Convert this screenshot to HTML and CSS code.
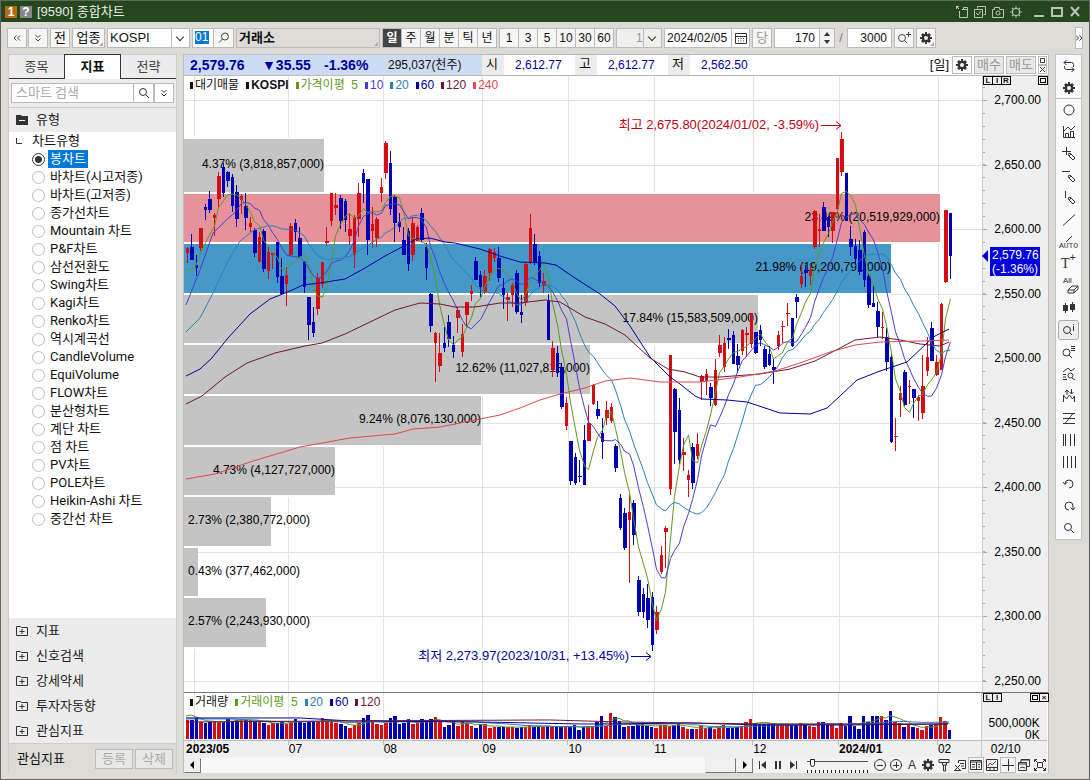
FILE: index.html
```html
<!DOCTYPE html>
<html lang="ko">
<head>
<meta charset="utf-8">
<title>[9590] 종합차트</title>
<link rel="stylesheet" href="styles.css">
</head>
<body>
<svg class="defs" aria-hidden="true">
  <symbol id="gear" viewBox="0 0 12 12"><path d="M5 0h2v2h1l1-1 2 2-1 1v1h2v2h-2v1l1 1-2 2-1-1h-1v2H5v-2H4l-1 1-2-2 1-1V7H0V5h2V4L1 3l2-2 1 1h1zM6 4a2 2 0 1 0 0 4 2 2 0 0 0 0-4z" fill="currentColor" fill-rule="evenodd"/></symbol>
  <symbol id="sun" viewBox="0 0 12 12"><circle cx="6" cy="6" r="3" /><path d="M6 1v2M6 9v2M1 6h2M9 6h2M2.500 2.500l1 1M8.500 8.500l1 1M2.500 9.500l1-1M8.500 3.500l1-1"/></symbol>
  <symbol id="search" viewBox="0 0 12 12"><circle cx="5" cy="5" r="3.5"/><path d="M7.5 7.5L11 11"/></symbol>
  <symbol id="searchl" viewBox="0 0 12 12"><circle cx="7" cy="4.500" r="3.500"/><path d="M4.500 7L1 10.500"/></symbol>
  <symbol id="dblleft" viewBox="0 0 12 12"><path d="M5.500 3.500L3 6l2.500 2.500M9 3.500L6.500 6 9 8.500"/></symbol>
  <symbol id="dblright" viewBox="0 0 12 12"><path d="M3 3.500L5.500 6 3 8.500M6.500 3.500L9 6 6.500 8.500"/></symbol>
  <symbol id="dbldown" viewBox="0 0 12 12"><path d="M3.500 3L6 5.500 8.500 3M3.500 6.500L6 9l2.500-2.500"/></symbol>
  <symbol id="folder" viewBox="0 0 12 12"><path d="M.5 1.500h4l1 1h6v8H.5zM6 4v5M3.500 6.500h5"/></symbol>
  <symbol id="folderopen" viewBox="0 0 12 12"><path d="M0 1h5l1 1h6v9H0z" fill="#333" stroke="none"/><path d="M3 6.500h6" stroke="#fff"/></symbol>
  <symbol id="pencil" viewBox="0 0 14 14"><path d="M6 7l2-1 5 5-2 2-4-4zM7 9l2-2"/></symbol>
</svg>

<header class="titlebar">
  <span class="badge badge-no">1</span><span class="badge badge-help">?</span>
  <h1>[9590] 종합차트</h1>
  <div class="winbtns">
    <button aria-label="이동"><svg class="i14" viewBox="0 0 14 14"><path d="M1 1l3 3M1.500 4V1.500H4M4.500 6v6.500h8v-8H7M8.500 4.500v-2h4v2"/></svg></button>
    <button aria-label="선택"><svg class="i14" viewBox="0 0 14 14"><path d="M4.500 3.500v-2h8v8h-2M1.500 4.500h8v8h-8zM3 8l2 2 3-4"/></svg></button>
    <button aria-label="캡처"><svg class="i14" viewBox="0 0 14 14"><path d="M1.500 4.500h2v-2h5v2h4v8h-11z"/><circle cx="7" cy="8" r="2"/></svg></button>
    <button aria-label="설정"><svg class="i14"><use href="#sun"/></svg></button>
    <button aria-label="최소화" class="big"><svg class="i14" viewBox="0 0 14 14"><path d="M2 11h10" stroke-width="2"/></svg></button>
    <button aria-label="최대화"><svg class="i14" viewBox="0 0 14 14"><path d="M2 3h10v8H2z" stroke-width="2"/></svg></button>
    <button aria-label="닫기"><svg class="i14" viewBox="0 0 14 14"><path d="M3 2l8 9M11 2l-8 9" stroke-width="2"/></svg></button>
  </div>
</header>

<div class="toolbar">
  <div class="pair"><button class="btn" aria-label="접기"><svg class="i12"><use href="#dblleft"/></svg></button><button class="btn" aria-label="펼치기"><svg class="i12"><use href="#dbldown"/></svg></button></div>
  <button class="btn">전</button>
  <button class="btn wide corner">업종</button>
  <div class="combo symbol"><select aria-label="지수"><option>KOSPI</option></select></div>
  <div class="code"><input aria-label="코드" value="01"><button class="btn" aria-label="찾기"><svg class="i12"><use href="#searchl"/></svg></button></div>
  <div class="name corner">거래소</div>
  <div class="seg"><button class="on">일</button><button>주</button><button>월</button><button>분</button><button>틱</button><button>년</button></div>
  <div class="seg"><button>1</button><button>3</button><button>5</button><button>10</button><button>30</button><button>60</button></div>
  <div class="combo unit"><select aria-label="단위"><option>1</option></select></div>
  <div class="date"><input aria-label="날짜" value="2024/02/05"><button aria-label="달력"><svg class="i12" viewBox="0 0 12 12"><path d="M.5 1.500h11v10H.5zM.5 4.500h11M3 6.500h1M5.500 6.500h1M8 6.500h1M3 9h1M5.500 9h1M8 9h1"/></svg></button></div>
  <button class="btn dim">당</button>
  <div class="spin"><input aria-label="봉 개수" value="170"><button aria-label="증감"><svg viewBox="0 0 8 14"><path d="M1 5l3-4 3 4zM1 9l3 4 3-4z"/></svg></button></div>
  <span class="slash">/</span>
  <input class="total" aria-label="전체 개수" value="3000">
  <button class="btn" aria-label="확대"><svg class="i14" viewBox="0 0 14 14"><circle cx="5" cy="7" r="3.500"/><path d="M7.500 9.500L10 12M11.500 1v5M9 3.500h5"/></svg></button>
  <button class="btn corner" aria-label="환경설정"><svg class="i12"><use href="#gear"/></svg></button>
  <button class="more" aria-label="더보기"><svg class="i12"><use href="#dblright"/></svg></button>
</div>

<div class="body">
  <aside class="side">
    <nav class="tabs"><button>종목</button><button class="on">지표</button><button>전략</button></nav>
    <div class="find"><input aria-label="스마트 검색" placeholder="스마트 검색"><button aria-label="검색"><svg class="i12"><use href="#search"/></svg></button><button class="sep" aria-label="옵션"><svg class="i12"><use href="#dbldown"/></svg></button></div>
    <button class="group first"><svg class="i12"><use href="#folderopen"/></svg>유형</button>
    <div class="tree">
      <div class="root"><svg viewBox="0 0 6 6"><path d="M.5 0v5.500H6"/></svg>차트유형</div>
      <label><input type="radio" name="t" checked><span>봉차트</span></label>
      <label><input type="radio" name="t"><span>바차트(시고저종)</span></label>
      <label><input type="radio" name="t"><span>바차트(고저종)</span></label>
      <label><input type="radio" name="t"><span>종가선차트</span></label>
      <label><input type="radio" name="t"><span>Mountain 차트</span></label>
      <label><input type="radio" name="t"><span>P&amp;F차트</span></label>
      <label><input type="radio" name="t"><span>삼선전환도</span></label>
      <label><input type="radio" name="t"><span>Swing차트</span></label>
      <label><input type="radio" name="t"><span>Kagi차트</span></label>
      <label><input type="radio" name="t"><span>Renko차트</span></label>
      <label><input type="radio" name="t"><span>역시계곡선</span></label>
      <label><input type="radio" name="t"><span>CandleVolume</span></label>
      <label><input type="radio" name="t"><span>EquiVolume</span></label>
      <label><input type="radio" name="t"><span>FLOW차트</span></label>
      <label><input type="radio" name="t"><span>분산형차트</span></label>
      <label><input type="radio" name="t"><span>계단 차트</span></label>
      <label><input type="radio" name="t"><span>점 차트</span></label>
      <label><input type="radio" name="t"><span>PV차트</span></label>
      <label><input type="radio" name="t"><span>POLE차트</span></label>
      <label><input type="radio" name="t"><span>Heikin-Ashi 차트</span></label>
      <label><input type="radio" name="t"><span>중간선 차트</span></label>
    </div>
    <button class="group"><svg class="i12"><use href="#folder"/></svg>지표</button>
    <button class="group"><svg class="i12"><use href="#folder"/></svg>신호검색</button>
    <button class="group"><svg class="i12"><use href="#folder"/></svg>강세약세</button>
    <button class="group"><svg class="i12"><use href="#folder"/></svg>투자자동향</button>
    <button class="group"><svg class="i12"><use href="#folder"/></svg>관심지표</button>
    <div class="sidefoot"><span>관심지표</span><button disabled>등록</button><button disabled>삭제</button></div>
  </aside>

  <main class="panel">
    <div class="quote">
      <div class="now"><b>2,579.76</b><b class="diff">▼35.55</b><b class="pct">-1.36%</b><span>295,037(천주)</span></div>
      <span class="k">시</span><span class="v">2,612.77</span>
      <span class="k">고</span><span class="v">2,612.77</span>
      <span class="k">저</span><span class="v">2,562.50</span>
      <span class="day">[일]</span>
      <button class="qb sq" aria-label="설정"><svg class="i12"><use href="#gear"/></svg></button>
      <button class="qb">매수</button><button class="qb">매도</button>
      <div class="mini"><button aria-label="최대화"><svg viewBox="0 0 7 7"><path d="M1.500 1.500h4v4h-4z"/></svg></button><button aria-label="닫기"><svg viewBox="0 0 7 7"><path d="M1 1l5 5M6 1L1 6"/></svg></button></div>
    </div>
    <section class="plot">
      <svg id="price" viewBox="184 76 864 616" preserveAspectRatio="xMinYMin meet" role="img" aria-label="KOSPI 일봉 차트"></svg>
      <div class="legend"><span>대기매물</span><span><b>KOSPI</b></span><span class="c5">가격이평&nbsp; 5</span><span class="c10">10</span><span class="c20">20</span><span class="c60">60</span><span class="c120">120</span><span class="c240">240</span></div>
      <div class="scale"><button>L</button><button>I</button><button>R</button><button class="end" aria-label="최대화"><i></i></button></div>
    </section>
    <section class="plot vol">
      <svg id="volume" viewBox="184 693 864 64" preserveAspectRatio="xMinYMin meet" role="img" aria-label="거래량"></svg>
      <div class="legend"><span>거래량</span><span class="c5">거래이평&nbsp; 5</span><span class="c20">20</span><span class="c60">60</span><span class="c120">120</span></div>
      <div class="scale"><button>L</button><button>I</button><button class="end" aria-label="최대화"><i></i></button><button aria-label="닫기">×</button></div>
    </section>
    <footer class="foot">
      <button class="arrow" aria-label="왼쪽"><svg viewBox="0 0 5 8"><path d="M4 0v8L0 4z"/></svg></button>
      <div class="track"><div class="thumb"></div></div>
      <button class="arrow" aria-label="오른쪽"><svg viewBox="0 0 5 8"><path d="M1 0v8l4-4z"/></svg></button>
      <div class="play">
        <button aria-label="처음"><svg class="i12" viewBox="0 0 12 12"><path d="M2.500 2v8"/><path class="f" d="M9 2v8L4 6z"/></svg></button>
        <button aria-label="일시정지"><svg class="i12" viewBox="0 0 12 12"><path d="M4 2v8M8 2v8" stroke-width="2"/></svg></button>
        <button aria-label="끝"><svg class="i12" viewBox="0 0 12 12"><path d="M9.500 2v8"/><path class="f" d="M3 2v8l5-4z"/></svg></button>
      </div>
      <input class="speed" type="range" min="0" max="100" value="5" aria-label="속도">
      <div class="tools">
        <button aria-label="축소"><svg class="i14" viewBox="0 0 14 14"><circle cx="7" cy="7" r="5.500"/><path d="M4 7.500h6"/></svg></button>
        <button aria-label="확대"><svg class="i14" viewBox="0 0 14 14"><circle cx="7" cy="7" r="5.500"/><path d="M4 7.500h6M7.500 4v6"/></svg></button>
        <button>A</button>
        <button aria-label="설정"><svg class="i12"><use href="#gear"/></svg></button>
        <button aria-label="도구"><svg class="i14" viewBox="0 0 14 14"><path d="M2 1.500h10v3H2zM5.500 5v2h4V5M6.500 7v6h2V7"/></svg></button>
        <button aria-label="엑셀"><svg class="i14" viewBox="0 0 14 14"><path d="M5.500 5V2.500h7v8H9M7 5.500h4M8 8h3M2 7l5 5M7 7l-5 5M1 12.500h7"/></svg></button>
        <button class="box" aria-label="표"><svg class="i14" viewBox="0 0 14 14"><path d="M1.500 2.500h11v9h-11zM1 4h12M7.500 4v8M3 6.500h3M3 9h3M9 6.500h2M9 9h2"/></svg></button>
        <button aria-label="차트"><svg class="i14" viewBox="0 0 14 14"><path d="M1.500 1.500h11v11h-11zM2 9.500h10M5 10v2M9 10v2"/><path d="M3 8l2-3 2 2 4-4" stroke="#b03050"/></svg></button>
        <button class="box" aria-label="십자선"><svg class="i14" viewBox="0 0 14 14"><path d="M7.500 1v12M1 7.500h12"/></svg></button>
        <button aria-label="창"><svg class="i14" viewBox="0 0 14 14"><path d="M4 4V1.500h8.500v7H10M1.500 4.500h8v8h-8zM1 6h9M4 2h9M3 10l2-1 3 1"/></svg></button>
        <button aria-label="전체"><svg class="i14" viewBox="0 0 14 14"><path d="M4.500 4.500h5v5h-5zM1.500 4V1.500H4M10 1.500h2.500V4M12.500 10v2.500H10M4 12.500H1.500V10M2 2l2 2M12 2l-2 2M2 12l2-2M12 12l-2-2"/></svg></button>
      </div>
    </footer>
  </main>

  <nav class="rail">
    <button aria-label="순환"><svg class="i14" viewBox="0 0 14 14"><path d="M4.500 1L2 3.500 4.500 6M2 3.500h7.500a2 2 0 0 1 2 2V8M9.500 8l2.500 2.500L9.500 13M12 10.500H4.500a2 2 0 0 1-2-2V7"/></svg></button>
    <button class="line" aria-label="설정"><svg class="i12"><use href="#gear"/></svg></button>
    <button aria-label="원"><svg class="i14" viewBox="0 0 14 14"><circle cx="7" cy="7" r="5"/></svg></button>
    <button aria-label="지표"><svg class="i14" viewBox="0 0 14 14"><path d="M1.500 1v11.500H13M2 6l4-4 3 3 4-4M3.500 12V8.500h3V12M8.500 12V6.500h3V12"/></svg></button>
    <button aria-label="십자선 그리기"><svg class="i14" viewBox="0 0 14 14"><path d="M4.500 0v8M0 4.500h9"/><use href="#pencil"/></svg></button>
    <button aria-label="수평선 그리기"><svg class="i14" viewBox="0 0 14 14"><path d="M0 2.500h8"/><use href="#pencil"/></svg></button>
    <button aria-label="수직선 그리기"><svg class="i14" viewBox="0 0 14 14"><path d="M3.500 0v7"/><use href="#pencil"/></svg></button>
    <button aria-label="추세선"><svg class="i14" viewBox="0 0 14 14"><path d="M1 12.500L13 1.500"/></svg></button>
    <button class="auto" aria-label="자동 추세선"><svg viewBox="0 0 16 7"><path d="M5 7l6-6"/></svg>AUTO</button>
    <button class="txt" aria-label="문자">T<sup>+</sup></button>
    <button class="all" aria-label="전체 삭제">All<svg class="i12" viewBox="0 0 12 12"><path d="M1 6l4-4h6L7 6zM1 6v3h6V6M7 9l4-4V2"/></svg></button>
    <button aria-label="봉"><svg class="i14" viewBox="0 0 14 14"><path d="M3.500 2v10M10.500 1v10"/><path class="f" d="M1 4h5v6H1zM8 3h5v6H8z"/></svg></button>
    <button class="sel" aria-label="정보 보기"><svg class="i14" viewBox="0 0 14 14"><circle cx="5" cy="7" r="3.500"/><path d="M7.500 9.500L10 12M11.500 1v1M11.500 3v5"/></svg></button>
    <button aria-label="목록 보기"><svg class="i14" viewBox="0 0 14 14"><circle cx="4.500" cy="7.500" r="3.500"/><path d="M7 10l3 3M9 1.500h4M9 3.500h4M9 5.500h4"/></svg></button>
    <button aria-label="패턴 찾기"><svg class="i14" viewBox="0 0 14 14"><path d="M1 5l5-4 3 3 4-3M1 7.500h3M1 10h3M1 12.500h4M10 11l3 2"/><circle cx="8.500" cy="8.500" r="2.500"/></svg></button>
    <button aria-label="신호"><svg class="i14" viewBox="0 0 14 14"><path d="M1.500 13V6l3 4 3-4 3 4 2-3v6M5 6V1M3 3l2-2 2 2M9.500 0v5M7.500 3l2 2 2-2"/></svg></button>
    <button aria-label="피보나치"><svg class="i14" viewBox="0 0 14 14"><path d="M1 2.500h12M1 7.500h12M1 12.500h12M11 2.500L3 12.500"/></svg></button>
    <button aria-label="시간대"><svg class="i14" viewBox="0 0 14 14"><path d="M1.500 1v12M3.500 1v12M8.500 1v12M12.500 1v12"/></svg></button>
    <button aria-label="등간격"><svg class="i14" viewBox="0 0 14 14"><path d="M1.500 1v12M5.500 1v12M9.500 1v12M13.500 1v12"/></svg></button>
    <button aria-label="되돌리기"><svg class="i14" viewBox="0 0 14 14"><path d="M3 7a4 4 0 1 1 4 4M1 5l2 2.500L5.500 5"/></svg></button>
    <button aria-label="다시하기"><svg class="i14" viewBox="0 0 14 14"><path d="M7 11a4 4 0 1 1 4-4v3M8.500 8.500L11 11l2-2.500"/></svg></button>
    <button aria-label="돋보기"><svg class="i12"><use href="#search"/></svg></button>
  </nav>
</div>
<script src="chart.js"></script>
</body>
</html>
```
FILE: styles.css
```css
* { box-sizing: border-box; }
body {
  margin: 0;
  min-height: 100vh;
  display: flex;
  flex-direction: column;
  background: #dcdbd6;
  border: 1px solid #666;
  border-top-color: #5c7058;
  color: #111;
  font: 12px/16px "Liberation Sans", "Noto Sans CJK KR", sans-serif;
}
button, input, select { font: inherit; color: inherit; margin: 0; padding: 0; border-radius: 0; }
button { display: flex; align-items: center; justify-content: center; background: none; border: 0; flex: none; white-space: nowrap; }
input { min-width: 0; border: 0; background: none; outline: 0; }
svg { fill: none; stroke: #333; flex: none; }
.defs { position: absolute; width: 0; height: 0; }
.i12 { width: 12px; height: 12px; }
.i14 { width: 14px; height: 14px; }
.f { fill: #333; stroke: none; }
use[href="#gear"] { stroke: none; color: #333; }

.titlebar { height: 21px; flex: none; display: flex; align-items: center; gap: 3px; padding: 0 7px 0 4px; background: #25461e; color: #e8ece6; }
.badge { width: 12px; height: 12px; background: #b86a10; color: #fff; font-weight: bold; line-height: 12px; text-align: center; }
.badge-help { background: #85888a; }
.titlebar h1 { flex: 1; margin: 0 0 0 2px; font-size: 13px; font-weight: normal; line-height: 16px; }
.winbtns { display: flex; gap: 4px; }
.winbtns svg { stroke: #b9c4b5; }
.winbtns .big { margin-left: 5px; }

.toolbar { display: flex; align-items: center; gap: 2px; height: 32px; flex: none; padding-left: 6px; }
.pair { display: flex; gap: 1px; }
.btn { width: 20px; height: 20px; background: #f6f6f5; border: 1px solid #bbb; font-size: 13px; }
.btn svg { stroke: #444; }
.wide { width: 33px; }
.dim { color: #999; }
.corner { position: relative; }
.corner::after { content: ""; position: absolute; right: 1px; bottom: 1px; border: 2px solid; border-color: transparent #aaa #aaa transparent; }
.combo { position: relative; height: 20px; border: 1px solid #bbb; background: #fff; }
.combo select { width: 100%; height: 18px; border: 0; appearance: none; background: none; padding-left: 2px; font-size: 13px; line-height: 16px; }
.combo::after { content: ""; position: absolute; right: 6px; top: 5px; width: 5px; height: 5px; border: solid #333; border-width: 0 1px 1px 0; transform: rotate(45deg); }
.combo::before { content: ""; position: absolute; right: 17px; top: 0; width: 1px; height: 18px; background: #bbb; }
.symbol { width: 83px; }
.unit { width: 46px; background: #efefee; color: #999; }
.unit select { padding-left: 19px; font-size: 12px; }
.code { display: flex; width: 42px; height: 20px; border: 1px solid #bbb; background: #fff; }
.code input { width: 14px; height: 13px; margin: 2px 4px 0 2px; background: #0078d7; color: #fff; font-size: 12px; line-height: 13px; }
.code .btn { height: 18px; border-width: 0 0 0 1px; }
.name { width: 144px; height: 20px; border: 1px solid #bbb; padding-left: 2px; font-size: 13px; font-weight: bold; line-height: 17px; }
.seg { display: flex; height: 20px; border: 1px solid #bbb; background: #f6f6f5; }
.seg button { width: 19px; border-right: 1px solid #bbb; font-size: 12px; }
.seg button:last-child { border: 0; width: 18px; }
.seg .on { background: #444; color: #fff; font-weight: bold; }
.date { display: flex; width: 86px; height: 20px; border: 1px solid #bbb; background: #fff; }
.date input { flex: 1; padding-left: 2px; }
.date button { width: 18px; border-left: 1px solid #bbb; }
.spin { display: flex; width: 61px; height: 20px; border: 1px solid #bbb; background: #fff; }
.spin input { flex: 1; text-align: right; padding-right: 4px; }
.spin button { width: 15px; border-left: 1px solid #bbb; background: #f3f3f3; }
.spin svg { width: 8px; height: 14px; fill: #333; stroke: none; }
.slash { width: 8px; text-align: center; color: #777; }
.total { width: 45px; height: 20px; border: 1px solid #bbb; background: #fff; text-align: right; padding-right: 4px; }
.more { width: 8px; height: 22px; margin: 0 6px 0 auto; background: #fafafa; border: 1px solid #bbb; overflow: hidden; }

.body { flex: 1; display: flex; align-items: stretch; gap: 6px; padding: 0 7px 6px 7px; min-height: 0; }

.side { width: 169px; flex: none; display: flex; flex-direction: column; background: #ececec; border: solid #ccc; border-width: 0 1px; font: 13px/18px Roboto, "Noto Sans CJK KR", sans-serif; }
.tabs { display: flex; height: 25px; }
.tabs button { flex: 1; border-top: 1px solid #ccc; border-bottom: 1px solid #333; color: #444; }
.tabs .on { background: #fff; border: 1px solid #333; border-bottom: 0; color: #111; font-weight: bold; }
.find { display: flex; height: 20px; margin: 4px 2px; border: 1px solid #bbb; background: #fff; }
.find input { flex: 1; padding-left: 4px; }
.find input::placeholder { color: #aaa; }
.find button { width: 20px; border-left: 1px solid #bbb; }
.find .sep { border-left: 2px solid #bbb; }
.group { height: 25px; justify-content: flex-start; gap: 8px; padding-left: 7px; color: #222; }
.first { border-top: 1px solid #ccc; }
.tree { flex: 1; background: #fff; overflow: hidden; }
.root, .tree label { display: flex; align-items: center; height: 18px; }
.root { gap: 10px; padding-left: 7px; }
.root svg { width: 6px; height: 6px; }
.tree label { padding-left: 23px; gap: 3px; }
.tree input { appearance: none; width: 13px; height: 13px; border: 1px solid #bbb; border-radius: 50%; background: #fff; }
.tree input:checked { border-color: #333; background: radial-gradient(circle, #333 3px, #fff 4px); }
.tree span { padding: 0 2px; }
.tree input:checked + span { background: #0078d7; color: #fff; }
.sidefoot { display: flex; align-items: center; gap: 2px; height: 30px; padding: 0 3px 0 8px; background: #dcdbd6; border-top: 1px solid #ccc; }
.sidefoot span { flex: 1; }
.sidefoot button { width: 38px; height: 20px; border: 1px solid #bbb; background: #e8e8e6; color: #aaa; }

.panel { flex: 1; min-width: 0; display: flex; flex-direction: column; background: #fff; border: 1px solid #bbb; border-bottom: 0; }
.quote { display: flex; align-items: center; height: 21px; flex: none; border-bottom: 1px solid #bbb; color: #0000a0; }
.now { display: flex; align-items: center; width: 298px; height: 20px; padding-left: 6px; background: #cddcf2; }
.now b { font-size: 14px; width: 72px; }
.now .diff { width: 62px; }
.now .pct { width: 64px; }
.now span, .k, .day { color: #111; }
.k { width: 22px; height: 20px; line-height: 18px; background: #ececec; padding-left: 4px; font-size: 13px; }
.v { width: 71px; padding-left: 11px; }
.day { margin-left: auto; margin-right: 3px; font-size: 13px; }
.qb { width: 30px; height: 18px; margin-right: 2px; border: 1px solid #bbb; background: #e8e8e8; color: #999; font-size: 13px; }
.sq { width: 20px; background: #fafafa; }
.mini { display: flex; flex-direction: column; width: 9px; margin-right: 1px; }
.mini button { height: 9px; border: 1px solid #bbb; }
.mini svg { width: 7px; height: 7px; }
.plot { position: relative; display: flex; flex: 617 0 0; min-height: 0; border-bottom: 1px solid #777; }
.vol { flex-grow: 64; border-bottom: 0; }
.plot > svg { flex: 1; min-width: 0; width: 100%; stroke: none; }
.plot text { font-size: 12px; fill: #000; stroke: none; }
.plot text.note { font-size: 13px; }
.legend { position: absolute; left: 6px; top: 1px; display: flex; gap: 7px; }
.legend span { display: flex; align-items: center; gap: 2px; }
.legend span::before { content: ""; width: 3px; height: 7px; background: currentColor; }
.c5 { color: #5f9a1c; }
.c10 { color: #4a3fd0; }
.c20 { color: #2a80b8; }
.c60 { color: #0000a0; }
.c120 { color: #6a1838; }
.c240 { color: #e04850; }
.scale { position: absolute; right: 0; top: 0; width: 65px; display: flex; }
.scale button { width: 10px; height: 9px; border: 1px solid #000; margin-right: -1px; font: bold 8px/8px "Liberation Sans", sans-serif; }
.scale .end { margin-left: auto; }
.scale .end:last-child { margin-right: 0; }
.scale i { width: 6px; height: 5px; border: 1px solid #000; }

.foot { display: flex; align-items: center; height: 16px; flex: none; background: #f3f3f3; }
.arrow { width: 17px; height: 15px; border: 1px solid; border-color: #eee #777 #777 #eee; background: #f0f0f0; }
.arrow svg { width: 5px; height: 8px; fill: #000; stroke: none; }
.track { flex: 1; display: flex; justify-content: flex-end; height: 15px; background: #f8f8f8; }
.thumb { width: 31px; background: #f0f0f0; border: 1px solid; border-color: #eee #777 #777 #eee; }
.play { display: flex; gap: 3px; margin: 0 8px 0 4px; }
.speed { appearance: none; width: 61px; height: 15px; background: linear-gradient(#555, #555) 0 3px / 100% 1px no-repeat, repeating-linear-gradient(90deg, #222 0 1px, transparent 1px 4px) 0 100% / 100% 3px no-repeat; }
.speed::-webkit-slider-thumb { appearance: none; width: 5px; height: 8px; margin-bottom: 5px; border: 1px solid #222; border-radius: 0 0 3px 3px; background: #fff; }
.tools { display: flex; margin-left: 4px; }
.tools button { width: 16px; height: 16px; color: #333; }
.tools .box { border: 1px solid #bbb; }

.rail { width: 27px; flex: none; align-self: flex-start; display: flex; flex-direction: column; background: #fafafa; border: 1px solid #c4c4c4; }
.rail button { height: 22px; color: #333; }
.rail .line { border-bottom: 1px solid #bbb; }
.rail .sel { height: 20px; margin: 1px 2px; border: 1px solid #aaa; border-radius: 3px; background: #eee; }
.auto { flex-direction: column; font: 8px/8px "Liberation Mono", monospace; }
.auto svg { width: 16px; height: 7px; }
.rail .txt { font: 14px/16px "Liberation Serif", serif; }
.txt sup { font: 11px/8px "Liberation Sans", sans-serif; align-self: flex-start; }
.rail .all { flex-direction: column; font: 8px/7px "Liberation Sans", sans-serif; align-items: flex-start; padding-left: 7px; }
.all svg { margin-left: 4px; }
```
FILE: chart.js
```js
const NS = 'http://www.w3.org/2000/svg';
const RED = '#d40c14', BLUE = '#0000b4';
const X0 = 186.5, STEP = 4.515;
const cx = i => Math.round(X0 + STEP * i);
const barWidth = i => cx(i + 1) - cx(i) - 1;
const price = document.getElementById('price');
const volume = document.getElementById('volume');

function add(parent, tag, attrs, text) {
  const el = document.createElementNS(NS, tag);
  for (const k in attrs) el.setAttribute(k, attrs[k]);
  if (text !== undefined) el.textContent = text;
  parent.appendChild(el);
  return el;
}
function rect(p, x, y, w, h, fill) {
  add(p, 'rect', { x, y, width: w, height: h, fill, 'shape-rendering': 'crispEdges' });
}
function line(p, points, color) {
  add(p, 'polyline', { points: points.map(q => q.join(',')).join(' '), fill: 'none', stroke: color, 'stroke-width': 1 });
}
function average(values, n, lead) {
  const out = lead.slice();
  for (let i = n - 1; i < values.length; i++) {
    let s = 0;
    for (let k = 0; k < n; k++) s += values[i - k];
    out.push([cx(i) + 0.5, (s / n).toFixed(1)]);
  }
  return out;
}

/* colour, high, body top, body bottom, low */
const candles = `r247,248,253,263 b234,247,260,260 b255,265,268,276 r228,228,248,251 b204,207,210,220 b191,199,210,213 r213,215,218,236 r172,176,199,207 b163,167,193,197 b171,172,181,187
b174,177,206,212 b185,192,219,227 r194,196,200,214 b193,206,218,230 r217,223,227,232 b228,230,253,257 r232,237,262,262 b229,231,269,272 r247,252,271,279 r252,253,255,269
b242,242,277,283 b258,276,294,295 r267,275,284,306 r223,226,255,256 b219,223,232,241 b227,238,257,257 b261,262,287,293 b297,297,325,340 b307,322,333,337 r273,278,309,315
r262,262,284,288 r227,241,243,246 r193,193,221,226 r193,205,208,215 b195,198,221,229 b199,201,220,232 r213,229,236,245 r215,217,255,268 r183,193,219,237 b169,173,183,203
b179,179,240,255 r207,224,231,248 r217,219,238,247 r178,187,193,202 r141,143,173,179 b151,163,209,215 b195,197,223,242 b213,222,227,232 b227,240,255,255 b228,231,264,271
r217,223,255,261 r225,227,241,241 b208,213,240,242 b243,247,268,280 b293,294,326,332 r332,333,343,382 r333,353,366,372 b327,343,348,352 b315,322,339,347 b336,345,352,358
r307,310,318,333 r324,334,352,357 r302,302,315,327 r285,291,294,301 b257,261,280,280 b271,275,287,297 r270,276,292,294 r248,249,273,281 r248,252,258,262 b247,258,278,282
b278,288,295,309 r293,297,300,321 r283,285,295,307 b270,273,312,314 b295,312,315,323 r263,264,302,306 r214,228,262,264 b234,244,262,265 b251,256,283,287 r273,281,286,293
b294,300,340,340 r341,348,370,377 b346,353,373,377 b363,367,407,409 r397,403,426,430 b441,441,481,485 b453,457,483,485 b460,476,477,482 b425,440,485,485 r405,423,441,441
r384,385,404,405 b401,409,416,419 b418,433,442,459 r401,410,418,425 r403,407,421,423 b444,446,468,472 b494,498,528,530 b508,513,548,550 r495,512,520,583 b500,503,535,545
b576,580,612,616 b588,594,612,618 b584,598,620,628 b592,597,645,651 r606,612,630,634 r546,555,572,574 r526,528,532,568 r355,355,489,495 b388,389,432,464 b398,410,460,464
r438,452,455,471 r470,475,480,497 b443,447,483,489 r433,444,456,459 r375,376,382,400 r369,374,381,395 b383,387,398,406 r359,370,405,406 r335,345,353,357 r337,343,367,372
b329,338,340,349 b331,335,364,364 b344,356,365,373 r329,330,351,355 r327,333,335,357 r313,313,344,348 b332,332,353,354 b325,330,340,346 b346,349,367,369 b346,354,365,366
b359,367,370,384 r331,335,346,350 r321,326,327,343 r303,313,314,326 b318,318,346,347 b294,297,302,318 r263,276,284,288 b265,270,273,287 r263,270,276,285 r210,211,247,249
r214,229,231,247 b202,207,231,231 b216,217,227,237 r212,212,231,243 r158,158,209,209 r132,139,172,176 b173,173,221,221 b226,239,247,256 b239,246,259,263 b240,250,272,275
b230,232,280,287 b273,276,305,308 b285,303,307,307 b302,311,327,337 r312,327,328,339 b328,337,362,371 b354,357,442,443 r418,436,437,451 r386,393,400,417 b370,372,405,406
r380,386,387,404 b389,389,398,418 r395,397,401,421 r355,386,413,419 r337,357,371,376 b322,328,361,361 r355,362,375,376 r303,304,370,370 r210,210,282,283 b213,213,256,279`
  .trim().split(/\s+/).map(s => [s[0], ...s.slice(1).split(',').map(Number)]);

const volumes = [
  19,19,21,17,16,17,17,17,17,20,18,19,20,19,19,18,17,16,14,16,16,17,15,17,20,17,16,17,18,18,21,18,17,16,15,13,11,14,16,21,
  24,17,15,14,16,21,23,15,16,20,15,16,20,18,20,22,17,12,14,18,13,18,16,13,11,15,15,11,12,12,12,12,12,11,12,12,14,12,13,12,
  13,12,12,12,13,12,14,9,12,13,13,17,23,13,26,22,18,12,13,13,14,15,13,12,11,14,14,13,14,15,12,10,10,10,13,11,12,10,12,14,
  11,11,12,13,17,20,16,15,15,15,15,14,15,15,14,14,16,15,13,12,17,17,14,14,11,16,13,23,13,10,23,17,23,23,23,19,28,17,16,12,
  14,12,11,9,13,14,15,22,18,9];

const months = [[194,'2023/05',186],[288,'07'],[383,'08'],[482,'09'],[568,'10'],[654,'11'],[753,'12'],[839,'2024/01'],[938,'02']];

/* price pane */
for (const [x] of months) rect(price, x, 76, 1, 616, '#e2e2e2');
for (let k = 0; k < 10; k++) rect(price, 184, Math.round(100 + 64.5 * k), 799, 1, '#e2e2e2');

/* top, height, right edge, fill, label, label baseline */
const bands = [
  [139,53,324,'#c4c4c4','4.37% (3,818,857,000)',168], [194,48,940,'#e5929a','23.49% (20,519,929,000)',221],
  [244,49,891,'#4698c8','21.98% (19,200,791,000)',271], [295,48,758,'#c4c4c4','17.84% (15,583,509,000)',322],
  [345,49,590,'#c4c4c4','12.62% (11,027,818,000)',372], [396,49,481,'#c4c4c4','9.24% (8,076,130,000)',423],
  [447,48,335,'#c4c4c4','4.73% (4,127,727,000)',474], [497,49,271,'#c4c4c4','2.73% (2,380,772,000)',524],
  [548,48,198,'#c4c4c4','0.43% (377,462,000)',575], [598,49,266,'#c4c4c4','2.57% (2,243,930,000)',625]];
for (const [y, h, end, fill] of bands) {
  rect(price, 184, y - 2, end - 184, h + 4, '#fff');
  rect(price, 184, y, end - 184, h, fill);
}
for (const [, , end, , label, base] of bands) {
  const left = end < 300;
  add(price, 'text', { x: left ? 188 : end, y: base, 'text-anchor': left ? 'start' : 'end' }, label);
}

candles.forEach(([c, hi, top, bot, lo], i) => {
  const fill = c === 'r' ? RED : BLUE;
  rect(price, cx(i), hi, 1, lo - hi, fill);
  rect(price, cx(i) - 1, top, barWidth(i), Math.max(bot - top, 1), fill);
});

const closes = candles.map(([c, , top, bot]) => (c === 'r' ? top : bot));
line(price, average(closes, 5, [[186,271],[195,268],[200,255]]), '#5f9a1c');
line(price, average(closes, 10, [[186,305],[200,270],[213,233]]), '#4a3fd0');
line(price, average(closes, 20, [[186,332],[200,318],[213,293],[227,263],[240,241],[254,230],[267,226]]), '#2a80b8');
line(price, [[186,376],[200,369],[211,359],[228,338],[250,314],[270,299],[290,291],[303,285],[320,283],[345,279],[365,268],[385,256],[402,247],[416,239],[430,238],[445,242],[455,243],[480,249],[500,256],[520,262],[545,263],[556,265],[575,278],[600,294],[615,306],[630,326],[650,357],[670,377],[680,384],[695,396],[702,399],[727,400],[747,402],[780,413],[810,414],[827,408],[840,396],[857,380],[880,371],[907,362],[927,343],[935,336],[949,329]], '#0000a0');
line(price, [[186,404],[202,396],[225,377],[247,363],[275,353],[305,346],[322,343],[345,334],[370,322],[395,310],[420,303],[440,304],[455,307],[475,307],[500,303],[520,303],[545,300],[560,302],[585,317],[605,324],[625,335],[650,358],[668,369],[685,372],[700,377],[720,377],[760,374],[790,369],[815,361],[840,348],[855,340],[880,337],[900,340],[920,344],[940,346],[949,342]], '#6a1838');
line(price, [[186,479],[215,474],[250,462],[300,447],[350,438],[395,434],[413,429],[440,427],[465,422],[500,415],[520,408],[540,400],[560,394],[585,388],[605,381],[630,378],[660,382],[700,382],[740,377],[775,371],[800,363],[830,352],[855,345],[880,342],[920,341],[949,340]], '#e04850');

function note(label, x, y, color) {
  add(price, 'text', { class: 'note', x, y: y + 4, 'text-anchor': 'end', style: 'fill:' + color }, label);
  add(price, 'path', { d: `M${x + 2} ${y + .5}h20m-5-4l5 4l-5 4`, fill: 'none', stroke: color });
}
note('최고 2,675.80(2024/01/02, -3.59%)', 819, 125, '#c00010');
note('최저 2,273.97(2023/10/31, +13.45%)', 629, 656, '#0000a0');

rect(price, 983, 76, 65, 616, '#efefef');
rect(price, 982, 76, 1, 616, '#ccc');
for (let y = 87; y < 692; y += 12.9) rect(price, 983, Math.round(y), 2, 1, '#aaa');
for (let k = 0; k < 10; k++) {
  const y = Math.round(100 + 64.5 * k);
  rect(price, 983, y, 4, 1, '#aaa');
  add(price, 'text', { x: 1041, y: y + 4, 'text-anchor': 'end' }, '2,' + (700 - 50 * k) + '.00');
}
add(price, 'path', { d: 'M982 256l6-6v12z', fill: '#0000e0' });
rect(price, 990, 247, 50, 29, '#0000e0');
add(price, 'text', { x: 992, y: 259, style: 'fill:#fff' }, '2,579.76');
add(price, 'text', { x: 992, y: 273, style: 'fill:#fff' }, '(-1.36%)');

/* volume pane */
for (const [x] of months) rect(volume, x, 693, 1, 48, '#e2e2e2');
volumes.forEach((h, i) => rect(volume, cx(i) - 1, 739 - h, barWidth(i), h, candles[i][0] === 'r' ? RED : BLUE));
const tops = volumes.map(h => 739 - h);
line(volume, average(tops, 5, [[186,716],[191,715]]), '#5f9a1c');
line(volume, average(tops, 20, [[186,719],[230,719]]), '#2a80b8');
line(volume, [[186,718],[300,718],[350,721],[480,722],[580,724],[610,724],[690,723],[760,725],[850,725],[949,724]], '#0000a0');
line(volume, [[186,722],[340,721],[550,720],[620,722],[760,724],[949,724]], '#6a1838');
rect(volume, 184, 741, 864, 16, '#efefef');
rect(volume, 184, 740, 864, 1, '#bbb');
rect(volume, 983, 693, 65, 47, '#efefef');
rect(volume, 982, 693, 1, 64, '#ccc');
for (const [x, label, at] of months) {
  const attrs = { x: at || x + 1, y: 753 };
  if (label.length > 2) attrs['font-weight'] = 'bold';
  rect(volume, x, 741, 1, 4, '#bbb');
  add(volume, 'text', attrs, label);
}
add(volume, 'text', { x: 1041, y: 727, 'text-anchor': 'end' }, '500,000K');
add(volume, 'text', { x: 1041, y: 739, 'text-anchor': 'end' }, '0K');
add(volume, 'text', { x: 992, y: 753 }, '02/10');
```
